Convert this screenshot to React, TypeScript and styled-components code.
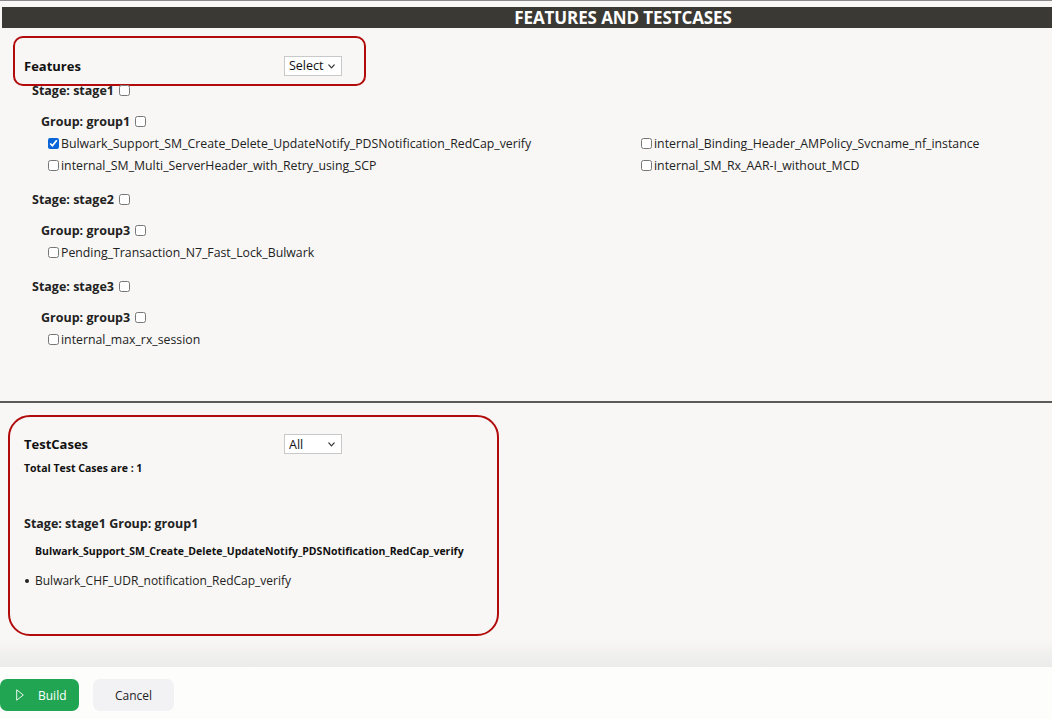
import React from 'react';
import styled, { createGlobalStyle } from 'styled-components';

const GlobalStyle = createGlobalStyle`
  * {
    box-sizing: border-box;
  }

  body {
    margin: 0;
    background: #f8f7f5;
    color: #111;
    font-family: 'Open Sans', 'Noto Sans', sans-serif;
  }
`;

const Page = styled.div`
  display: flex;
  flex-direction: column;
  min-height: 100vh;
  border-top: 1px solid #8a8a8a;
  padding-top: 6px;
`;

const TitleBar = styled.h1`
  margin: 0 0 0 2px;
  height: 21px;
  line-height: 21px;
  background: #3b3934;
  color: #fff;
  font-size: 17px;
  font-weight: 700;
  letter-spacing: -0.1px;
  text-align: center;
  padding-left: 192px;
`;

const FeaturesPanel = styled.section`
  height: 373px;
  padding-top: 8px;
`;

const HighlightBox = styled.div<{ $radius: number }>`
  border: 2.5px solid #b10b0b;
  border-radius: ${(p) => p.$radius}px;
`;

const FeatureHead = styled(HighlightBox)`
  margin-left: 13px;
  width: 353px;
  height: 50px;
  margin-bottom: -6px;
  padding: 9px 0 0 9px;
  display: flex;
  align-items: center;
`;

const HeadLabel = styled.span`
  width: 260px;
  font-size: 13px;
  font-weight: 700;
`;

const SelectWrap = styled.div`
  position: relative;
  width: 58px;
  height: 20px;

  svg {
    position: absolute;
    right: 7px;
    top: 8px;
    pointer-events: none;
  }
`;

const Select = styled.select`
  display: block;
  appearance: none;
  width: 100%;
  height: 20px;
  border: 1px solid #c9c9c9;
  border-radius: 0;
  background: #fff;
  padding: 0 0 0 4px;
  font-family: inherit;
  font-size: 12.5px;
  color: #111;
`;

const Chevron = () => (
  <svg width="7" height="5" viewBox="0 0 7 5" fill="none">
    <path d="M0.8 0.9 L3.5 3.8 L6.2 0.9" stroke="#333" strokeWidth="1.2" strokeLinecap="round" strokeLinejoin="round" />
  </svg>
);

const Tree = styled.div`
  padding-top: 0;
`;

const Stage = styled.div`
  margin-bottom: 13px;
`;

const Heading = styled.div<{ $indent: number }>`
  display: flex;
  align-items: center;
  height: 20px;
  padding-left: ${(p) => p.$indent}px;
  font-size: 12.5px;
  font-weight: 700;
  color: #222;
`;

const Group = styled(Heading)`
  margin-top: 11px;
`;

const Box = styled.input.attrs({ type: 'checkbox' })`
  width: 11px;
  height: 11px;
  margin: 0 0 0 5px;
  accent-color: #0a66d8;
`;

const Items = styled.div`
  display: grid;
  grid-template-columns: 593px 1fr;
  margin-top: 1px;
  padding-left: 48px;
`;

const Item = styled.label`
  display: flex;
  align-items: center;
  height: 22px;
  font-size: 12.3px;
  color: #222;
  white-space: nowrap;

  input {
    margin: 0 2px 0 0;
  }
`;

const Divider = styled.hr`
  margin: 0;
  border: none;
  height: 2px;
  background: #5b5b5b;
`;

const TestPanel = styled.section`
  flex: 1;
  padding: 12px 0 4px 8px;
  background: linear-gradient(to bottom, #f8f7f5 0, #f8f7f5 235px, #ebebeb 264px);
`;

const TestBox = styled(HighlightBox)`
  width: 491px;
  height: 221px;
  padding: 17px 0 0 14px;
`;

const TestHead = styled.div`
  display: flex;
  align-items: center;
  height: 20px;
`;

const Total = styled.div`
  margin-top: 7px;
  font-size: 10.5px;
  font-weight: 700;
`;

const StageGroup = styled.div`
  margin-top: 40px;
  font-size: 12.5px;
  font-weight: 700;
  color: #222;
`;

const CaseName = styled.div`
  margin: 12px 0 0 11px;
  font-size: 10.5px;
  font-weight: 700;
`;

const CaseList = styled.ul`
  margin: 14px 0 0;
  padding: 0;
  list-style: none;
  font-size: 12px;
  color: #222;

  li {
    display: flex;
    align-items: center;
  }

  li::before {
    content: '';
    width: 4px;
    height: 4px;
    border-radius: 50%;
    background: #222;
    margin: 1px 6px 0 1px;
  }
`;

const Footer = styled.footer`
  display: flex;
  gap: 14px;
  height: 52px;
  padding-top: 12px;
  background: #fdfdfc;
`;

const Button = styled.button<{ $primary?: boolean }>`
  display: flex;
  align-items: center;
  justify-content: ${(p) => (p.$primary ? 'flex-start' : 'center')};
  gap: 14px;
  height: 32px;
  width: ${(p) => (p.$primary ? 79 : 81)}px;
  border: none;
  border-radius: 7px;
  background: ${(p) => (p.$primary ? '#22a552' : '#f2f2f5')};
  color: ${(p) => (p.$primary ? '#fff' : '#222')};
  font-family: inherit;
  font-size: 12px;
  font-weight: 500;
  padding: 0 0 0 ${(p) => (p.$primary ? 16 : 0)}px;
`;

const PlayIcon = () => (
  <svg width="8" height="12" viewBox="0 0 8 12" fill="none">
    <path d="M0.7 0.8 L7.3 6 L0.7 11.2 Z" stroke="#fff" strokeWidth="0.9" strokeLinejoin="round" />
  </svg>
);

type Feature = { name: string; checked?: boolean };

const stages: { stage: string; group: string; features: Feature[] }[] = [
  {
    stage: 'stage1',
    group: 'group1',
    features: [
      { name: 'Bulwark_Support_SM_Create_Delete_UpdateNotify_PDSNotification_RedCap_verify', checked: true },
      { name: 'internal_Binding_Header_AMPolicy_Svcname_nf_instance' },
      { name: 'internal_SM_Multi_ServerHeader_with_Retry_using_SCP' },
      { name: 'internal_SM_Rx_AAR-I_without_MCD' },
    ],
  },
  {
    stage: 'stage2',
    group: 'group3',
    features: [{ name: 'Pending_Transaction_N7_Fast_Lock_Bulwark' }],
  },
  {
    stage: 'stage3',
    group: 'group3',
    features: [{ name: 'internal_max_rx_session' }],
  },
];

const App = () => (
  <>
    <GlobalStyle />
    <Page>
      <TitleBar>FEATURES AND TESTCASES</TitleBar>
      <FeaturesPanel>
        <FeatureHead $radius={10}>
          <HeadLabel>Features</HeadLabel>
          <SelectWrap>
            <Select defaultValue="select">
              <option value="select">Select</option>
            </Select>
            <Chevron />
          </SelectWrap>
        </FeatureHead>
        <Tree>
          {stages.map((s) => (
            <Stage key={s.stage}>
              <Heading $indent={32}>
                Stage: {s.stage}
                <Box />
              </Heading>
              <Group $indent={41}>
                Group: {s.group}
                <Box />
              </Group>
              <Items>
                {s.features.map((f) => (
                  <Item key={f.name}>
                    <Box defaultChecked={f.checked} />
                    {f.name}
                  </Item>
                ))}
              </Items>
            </Stage>
          ))}
        </Tree>
      </FeaturesPanel>
      <Divider />
      <TestPanel>
        <TestBox $radius={22}>
          <TestHead>
            <HeadLabel>TestCases</HeadLabel>
            <SelectWrap>
              <Select defaultValue="all">
                <option value="all">All</option>
              </Select>
              <Chevron />
            </SelectWrap>
          </TestHead>
          <Total>Total Test Cases are : 1</Total>
          <StageGroup>Stage: stage1 Group: group1</StageGroup>
          <CaseName>Bulwark_Support_SM_Create_Delete_UpdateNotify_PDSNotification_RedCap_verify</CaseName>
          <CaseList>
            <li>Bulwark_CHF_UDR_notification_RedCap_verify</li>
          </CaseList>
        </TestBox>
      </TestPanel>
      <Footer>
        <Button $primary>
          <PlayIcon />
          Build
        </Button>
        <Button>Cancel</Button>
      </Footer>
    </Page>
  </>
);

export default App;
